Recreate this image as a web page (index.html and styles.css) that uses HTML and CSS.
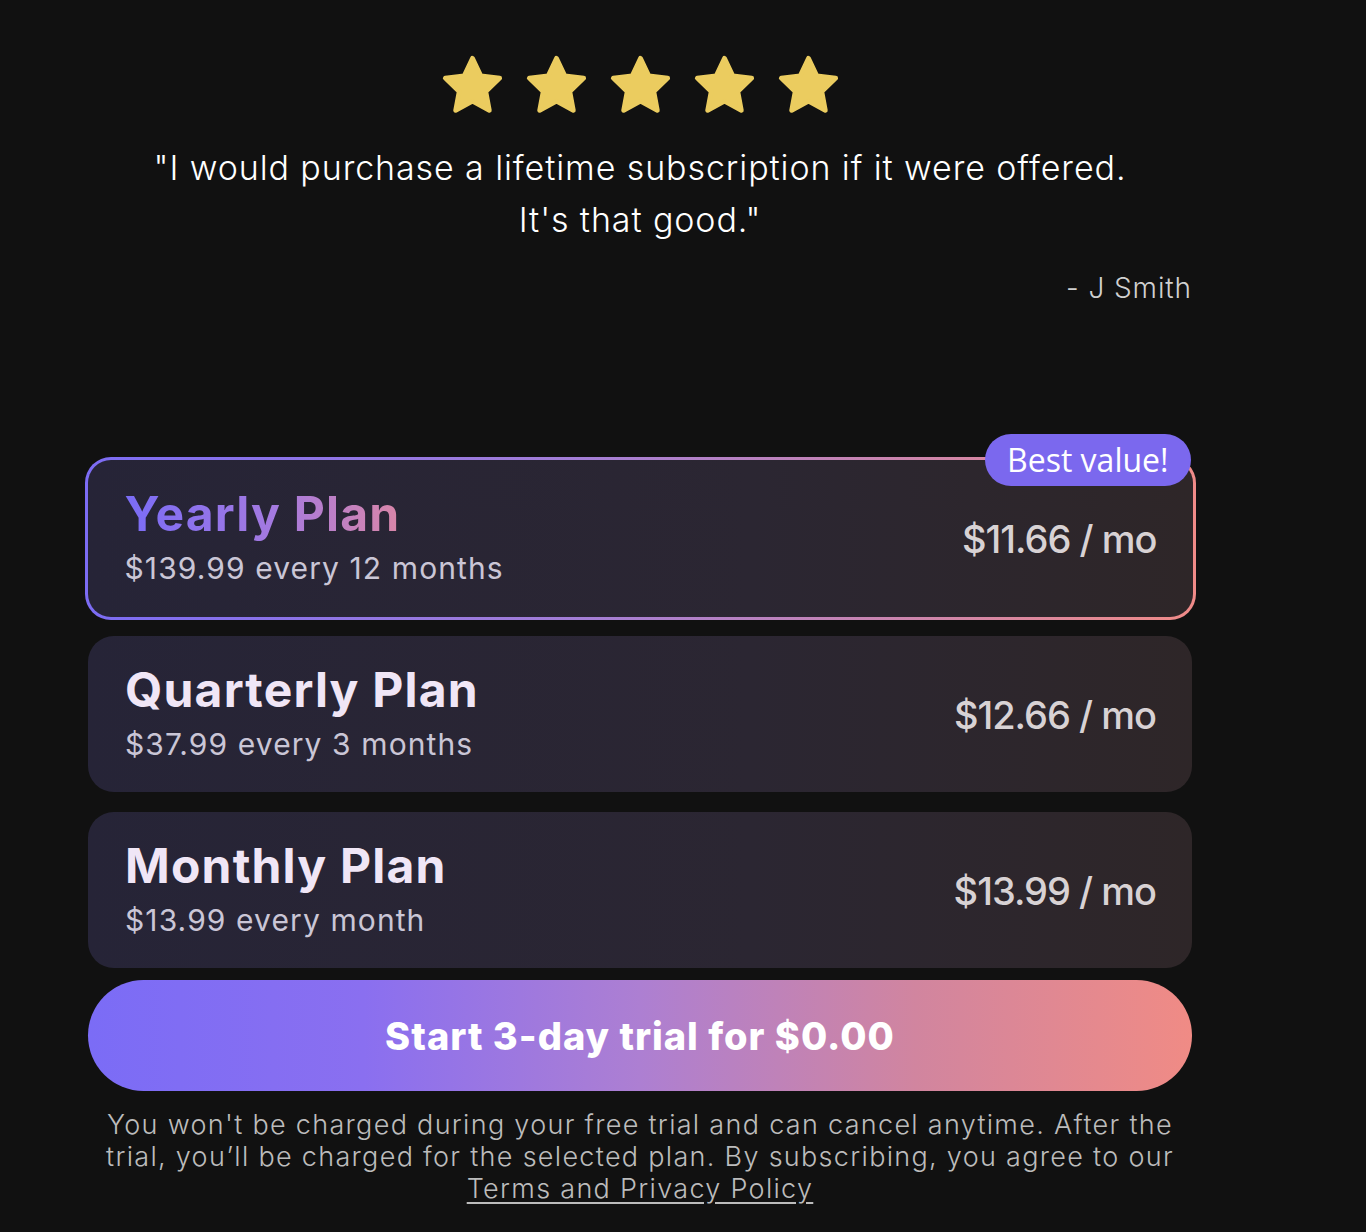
FILE: index.html
```html
<!DOCTYPE html>
<html lang="en">
<head>
<meta charset="utf-8">
<title>Plans</title>
<link rel="stylesheet" href="styles.css">
</head>
<body>
<main class="page">
  <section class="review">
    <div class="stars">
      <svg class="star" viewBox="0 0 24 24"><path d="M12 2.8l2.8 5.9 6.4.8-4.7 4.5 1.2 6.4L12 17.3l-5.7 3.1 1.2-6.4-4.7-4.5 6.4-.8z"/></svg>
      <svg class="star" viewBox="0 0 24 24"><path d="M12 2.8l2.8 5.9 6.4.8-4.7 4.5 1.2 6.4L12 17.3l-5.7 3.1 1.2-6.4-4.7-4.5 6.4-.8z"/></svg>
      <svg class="star" viewBox="0 0 24 24"><path d="M12 2.8l2.8 5.9 6.4.8-4.7 4.5 1.2 6.4L12 17.3l-5.7 3.1 1.2-6.4-4.7-4.5 6.4-.8z"/></svg>
      <svg class="star" viewBox="0 0 24 24"><path d="M12 2.8l2.8 5.9 6.4.8-4.7 4.5 1.2 6.4L12 17.3l-5.7 3.1 1.2-6.4-4.7-4.5 6.4-.8z"/></svg>
      <svg class="star" viewBox="0 0 24 24"><path d="M12 2.8l2.8 5.9 6.4.8-4.7 4.5 1.2 6.4L12 17.3l-5.7 3.1 1.2-6.4-4.7-4.5 6.4-.8z"/></svg>
    </div>
    <p class="quote">"I would purchase a lifetime subscription if it were offered.<br>It's that good."</p>
    <p class="author">- J Smith</p>
  </section>

  <section class="plans">
    <div class="card selected">
      <span class="badge">Best value!</span>
      <div class="info">
        <h2 class="title gradient-text">Yearly Plan</h2>
        <p class="sub">$139.99 every 12 months</p>
      </div>
      <div class="price">$11.66 / mo</div>
    </div>
    <div class="card">
      <div class="info">
        <h2 class="title">Quarterly Plan</h2>
        <p class="sub">$37.99 every 3 months</p>
      </div>
      <div class="price">$12.66 / mo</div>
    </div>
    <div class="card">
      <div class="info">
        <h2 class="title">Monthly Plan</h2>
        <p class="sub">$13.99 every month</p>
      </div>
      <div class="price">$13.99 / mo</div>
    </div>
  </section>

  <button class="cta">Start 3-day trial for $0.00</button>

  <p class="legal">You won't be charged during your free trial and can cancel anytime. After the<br>trial, you’ll be charged for the selected plan. By subscribing, you agree to our<br><a href="#">Terms and Privacy Policy</a></p>
</main>
</body>
</html>
```

FILE: styles.css
```css
* { box-sizing: border-box; }
html, body {
  margin: 0;
  padding: 0;
  background: #111111;
}
body {
  font-family: Inter, "Noto Sans", sans-serif;
  color: #fff;
}
.page {
  width: 1104px;
  margin-left: 88px;
  padding-top: 50px;
  padding-bottom: 20px;
}
.review {
  display: flex;
  flex-direction: column;
  align-items: center;
}
.stars {
  display: flex;
  gap: 13px;
}
.star {
  width: 71px;
  height: 71px;
  display: block;
}
.star path {
  fill: #ebcc5f;
  stroke: #ebcc5f;
  stroke-width: 1.6;
  stroke-linejoin: round;
}
.quote {
  margin: 21px 0 0;
  text-align: center;
  font-size: 34px;
  font-weight: 300;
  line-height: 52px;
  color: #ffffff;
  letter-spacing: 0.9px;
}
.author {
  align-self: flex-end;
  margin: 22px 0 0;
  font-size: 28px;
  font-weight: 300;
  line-height: 40px;
  color: #d0d0d0;
  letter-spacing: 0.9px;
}
.plans {
  margin-top: 152px;
  display: flex;
  flex-direction: column;
  gap: 20px;
}
.card {
  position: relative;
  height: 156px;
  border-radius: 26px;
  background: linear-gradient(90deg, #262437 0%, #2b2632 60%, #2e2628 100%);
  display: flex;
  align-items: center;
  justify-content: space-between;
  padding: 0 36px 0 37px;
}
.card.selected {
  height: 163px;
  margin: -3.5px -3.5px;
  border: 3.5px solid transparent;
  background:
    linear-gradient(90deg, #262437 0%, #2b2632 60%, #2e2628 100%) padding-box,
    linear-gradient(90deg, #7c6cf4 0%, #a47ed6 45%, #f08b88 100%) border-box;
  padding: 0 36px 0 37px;
}
.info {
  display: flex;
  flex-direction: column;
  padding-bottom: 5px;
}
.title {
  margin: 0;
  font-size: 48px;
  font-weight: 700;
  line-height: 58px;
  color: #f0e6f6;
  letter-spacing: 1.2px;
}
.gradient-text {
  background: linear-gradient(90deg, #7a6cf6 0%, #a57ae0 55%, #d986a8 100%);
  -webkit-background-clip: text;
  background-clip: text;
  color: transparent;
  align-self: flex-start;
}
.sub {
  margin: 6px 0 0;
  font-size: 30px;
  font-weight: 400;
  line-height: 38px;
  color: #cac6d6;
  letter-spacing: 1.1px;
}
.price {
  font-size: 38px;
  font-weight: 500;
  color: #d8d2d4;
  letter-spacing: -1px;
  margin-top: 2px;
}
.badge {
  position: absolute;
  top: -25.5px;
  right: 2px;
  height: 52px;
  padding: 0 22px;
  border-radius: 26px;
  background: #7b68ee;
  color: #ffffff;
  font-family: "Open Sans", sans-serif;
  font-size: 32px;
  line-height: 52px;
  font-weight: 400;
}
.cta {
  display: block;
  width: 100%;
  height: 111px;
  margin-top: 12px;
  border: none;
  border-radius: 56px;
  background: linear-gradient(90deg, #7b6cf6 0%, #8a6ff0 25%, #ad7fd2 50%, #d1859f 75%, #f08b85 100%);
  color: #ffffff;
  font-family: Inter, "Noto Sans", sans-serif;
  font-size: 38px;
  font-weight: 800;
  letter-spacing: 1px;
  cursor: pointer;
}
.legal {
  margin: 18px 0 0;
  text-align: center;
  font-size: 27px;
  font-weight: 300;
  line-height: 32px;
  color: #bcbcbc;
  letter-spacing: 1.3px;
}
.legal a {
  color: #bcbcbc;
  text-decoration: underline;
  text-underline-offset: 4px;
}
```
